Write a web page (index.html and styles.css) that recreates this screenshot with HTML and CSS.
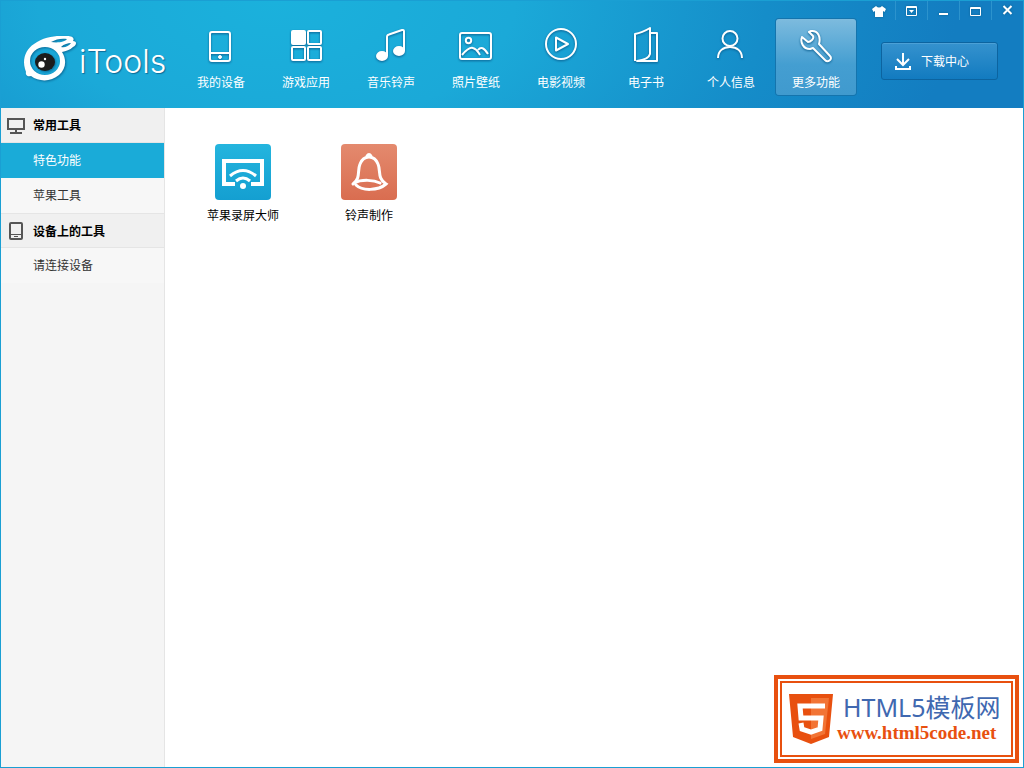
FILE: index.html
```html
<!DOCTYPE html>
<html lang="zh-CN">
<head>
<meta charset="utf-8">
<title>iTools</title>
<link rel="stylesheet" href="styles.css">
</head>
<body>
<div class="app">
  <header class="header">
    <a class="brand" href="#">
      <svg class="brand-mark" viewBox="0 0 54 48" aria-hidden="true">
        <path fill="#fff" fill-rule="evenodd" d="M2 33C-1 23 3 13 11 8C19 2 29 0 37 0H44C49 0 52 2 50 5C54 5 54 9 50 11C47 14 43 15 39 16C44 24 43 33 36 39C28 46 16 46 8 40C5 41 2 39 3 36ZM22 11A15 14 0 1 0 22 39A15 14 0 1 0 22 11ZM28 6C33 3 39 2 44 3C42 6 35 7 28 6ZM38 11C41 8 45 7 48 7C46 10 42 12 38 11Z"/>
        <ellipse cx="22" cy="26" rx="10" ry="9" fill="#1c1c1c"/>
        <circle cx="18.500" cy="28.500" r="3.200" fill="#fff"/>
        <circle cx="22" cy="23" r="1.200" fill="#fff"/>
      </svg>
      <span class="brand-name">iTools</span>
    </a>
    <nav class="nav">
      <button class="nav-item" type="button">
        <svg class="icon" viewBox="0 0 36 40"><rect x="7" y="6" width="20" height="29" rx="2"/><path d="M7 27h20"/><circle cx="17" cy="31" r="1.500" fill="#fff" stroke-width="1"/></svg>
        <span>我的设备</span>
      </button>
      <button class="nav-item" type="button">
        <svg class="icon" viewBox="0 0 36 40"><rect x="4" y="5" width="13" height="13" rx="1" fill="#fff"/><rect x="20" y="5" width="13" height="13" rx="1"/><rect x="4" y="21" width="13" height="13" rx="1"/><rect x="20" y="21" width="13" height="13" rx="1"/></svg>
        <span>游戏应用</span>
      </button>
      <button class="nav-item" type="button">
        <svg class="icon" viewBox="0 0 36 40"><path d="M14 30V11Q14 9 16 8.500L29 4Q31 3.500 31 5.500V25"/><ellipse cx="9" cy="30" rx="5" ry="4" fill="#fff"/><ellipse cx="26" cy="25" rx="5" ry="4" fill="#fff"/></svg>
        <span>音乐铃声</span>
      </button>
      <button class="nav-item" type="button">
        <svg class="icon" viewBox="0 0 36 40"><rect x="2" y="7" width="31" height="26" rx="2"/><circle cx="10.500" cy="14.500" r="2.700"/><path d="M4 29C9 23 12 21 15 22C19 23 20 26 22 29M20 24C23 20 26 22 30 28"/></svg>
        <span>照片壁纸</span>
      </button>
      <button class="nav-item" type="button">
        <svg class="icon" viewBox="0 0 36 40"><circle cx="18" cy="18" r="15"/><path d="M13 11.500V24.500L25 18Z"/></svg>
        <span>电影视频</span>
      </button>
      <button class="nav-item" type="button">
        <svg class="icon" viewBox="0 0 36 40"><path d="M7 35V8C13 7 17 5 22 2V28C21 32 17 34 9 35H29V7H23"/></svg>
        <span>电子书</span>
      </button>
      <button class="nav-item" type="button">
        <svg class="icon" viewBox="0 0 36 40"><circle cx="17" cy="12.500" r="7.500"/><path d="M5 32C5 25 10 21 17 21S29 25 29 32"/></svg>
        <span>个人信息</span>
      </button>
      <button class="nav-item nav-item-active" type="button" aria-current="page">
        <svg class="icon" viewBox="0 0 36 40"><path d="M4 11C2 16 5 23 12 23L15 22L27 34C30 37 35 33 32 30L21 18C23 11 20 4 13 5L11 6L15 10Q16 12 14 14Q12 16 10 16Z"/></svg>
        <span>更多功能</span>
      </button>
    </nav>
    <div class="side">
      <div class="window-controls">
        <button class="win-btn" type="button" aria-label="换肤"><svg viewBox="0 0 16 14"><path fill="#fff" d="M5 1Q8 4 11 1L15 4L13.500 7L12 6V12H4V6L2.500 7L1 4Z"/></svg></button>
        <button class="win-btn" type="button" aria-label="菜单"><svg viewBox="0 0 16 14"><path fill="none" stroke="#fff" d="M2.500 1.500h10v9h-10zM2 2.500h11"/><path fill="#fff" d="M5 5h5L7.500 8z"/></svg></button>
        <button class="win-btn" type="button" aria-label="最小化"><svg viewBox="0 0 16 14"><path fill="#fff" d="M3 8h9v2H3z"/></svg></button>
        <button class="win-btn" type="button" aria-label="最大化"><svg viewBox="0 0 16 14"><path fill="none" stroke="#fff" d="M2.500 2.500h10v8h-10zM2 3.500h11"/></svg></button>
        <button class="win-btn" type="button" aria-label="关闭"><svg viewBox="0 0 16 14"><path fill="none" stroke="#fff" stroke-width="2" d="M3.500 1L11.500 9M11.500 1L3.500 9"/></svg></button>
      </div>
      <button class="download" type="button">
        <svg viewBox="0 0 18 20"><path fill="none" stroke="#fff" stroke-width="2" d="M9 1V13M3 7L9 13L15 7M2 14V17H16V14"/></svg>
        <span>下载中心</span>
      </button>
    </div>
  </header>
  <div class="body">
    <aside class="sidebar">
      <h2 class="group-title">
        <svg viewBox="0 0 20 20"><path d="M2 3h16v10H2zM10 13v4M4 17h12"/></svg>常用工具
      </h2>
      <a class="side-link side-link-active" href="#">特色功能</a>
      <a class="side-link" href="#">苹果工具</a>
      <h2 class="group-title group-title-next">
        <svg viewBox="0 0 20 20"><rect x="4" y="1" width="12" height="16" rx="1"/><path d="M4 12.500h12M8 14.500h4" stroke-width="1"/></svg>设备上的工具
      </h2>
      <a class="side-link" href="#">请连接设备</a>
    </aside>
    <main class="content">
      <div class="tools">
        <a class="tool" href="#">
          <svg class="tool-icon tool-icon-blue" viewBox="0 0 56 56"><path d="M20 40H9V17H47V40H36" stroke-width="4"/><path d="M15 32Q28 21 41 32M21 37Q28 31 35 37"/><circle cx="28" cy="42" r="3" fill="#fff" stroke="none"/></svg>
          <span>苹果录屏大师</span>
        </a>
        <a class="tool" href="#">
          <svg class="tool-icon tool-icon-red" viewBox="0 0 56 56"><path d="M12 40C20 34 16 27 19 20C21 15 24 13 28 13S35 15 37 20C40 27 36 34 45 40C37 47 21 47 15 41M13 39C21 35 33 36 39 39M26 12Q28 9 30 12"/></svg>
          <span>铃声制作</span>
        </a>
      </div>
      <a class="sponsor" href="#">
        <span class="sponsor-inner">
          <svg class="shield" viewBox="0 0 44 50"><path fill="#e8500f" d="M0 0H44L40 43L22 50L4 43Z"/><path fill="#f27435" d="M22 4H40L36 40L22 45Z"/><path fill="none" stroke="#fff" stroke-width="5" d="M36 12H11L12 24H32L31 35L22 38L13 35L12 29"/></svg>
          <span class="sponsor-text">
            <span class="sponsor-name">HTML5模板网</span>
            <span class="sponsor-url">www.html5code.net</span>
          </span>
        </span>
      </a>
    </main>
  </div>
</div>
</body>
</html>
```
FILE: styles.css
```css
* { box-sizing: border-box; }
body {
  margin: 0;
  font: 12px/16px "Liberation Sans", "Noto Sans CJK SC", sans-serif;
  color: #000;
}
a { color: inherit; text-decoration: none; }
button { font: inherit; color: inherit; background: none; border: 0; padding: 0; cursor: pointer; }
.app {
  min-height: 100vh;
  display: flex;
  flex-direction: column;
  border: 1px solid #1a9fd3;
}
.header {
  display: flex;
  align-items: flex-start;
  padding-bottom: 13px;
  color: #fff;
  background: radial-gradient(ellipse 680px 360px at 27% 0, #1bb1dc 0%, #1ba9d8 35%, #158dc9 72%, #137dc1 100%);
}
.brand {
  display: flex;
  align-items: flex-start;
  flex: none;
  width: 180px;
  padding: 35px 0 0 22px;
}
.brand-mark { width: 54px; height: 48px; overflow: visible; filter: drop-shadow(1px 1px 1px #0b6c99); }
.brand-name {
  padding-top: 6px;
  margin-left: 2px;
  font: 300 32px/40px Inter, sans-serif;
  text-shadow: 1px 1px 1px #0b6c99;
}
.nav { display: flex; gap: 5px; padding-top: 18px; }
.nav-item {
  display: flex;
  flex-direction: column;
  align-items: center;
  gap: 9px;
  width: 80px;
  height: 76px;
  padding-top: 7px;
  border-radius: 3px;
}
.nav-item-active {
  background: linear-gradient(#7dbbde, #449ed1 60%, #409ace);
  box-shadow: 0 0 0 1px #1474ad;
}
.icon {
  width: 36px;
  height: 40px;
  overflow: visible;
  fill: none;
  stroke: #fff;
  stroke-width: 2;
  stroke-linejoin: round;
  filter: drop-shadow(0 1px 1px #0b5f90);
}
.side { margin-left: auto; display: flex; flex-direction: column; gap: 22px; }
.window-controls { display: flex; }
.win-btn { width: 32px; height: 19px; }
.win-btn + .win-btn { border-left: 1px solid #2c93cd; }
.win-btn svg { display: block; width: 16px; height: 14px; margin: 2px auto 0; filter: drop-shadow(0 0 1px #0b5f90); }
.download {
  display: flex;
  align-items: center;
  gap: 9px;
  width: 117px;
  height: 38px;
  margin-left: 18px;
  padding: 1px 0 0 12px;
  border: 1px solid #0c64a0;
  border-radius: 3px;
  background: linear-gradient(#3592ce, #127bc0);
  box-shadow: inset 0 1px #4ba0d6;
}
.download svg { width: 18px; height: 20px; }
.body { flex: 1; display: flex; }
.sidebar { flex: none; width: 164px; background: #f5f5f5; border-right: 1px solid #e5e5e5; }
.group-title {
  display: flex;
  align-items: center;
  gap: 7px;
  height: 35px;
  margin: 0;
  padding: 2px 0 0 5px;
  font-size: 12px;
  line-height: 16px;
  background: #f0f0f0;
  border-bottom: 1px solid #e5e5e5;
}
.group-title-next { border-top: 1px solid #e5e5e5; }
.group-title svg { width: 20px; height: 20px; fill: none; stroke: #555; stroke-width: 2; }
.side-link {
  display: block;
  padding: 2px 0 0 32px;
  line-height: 33px;
  color: #333;
  background: #f7f7f7;
}
.side-link-active { color: #fff; background: #1aabd8; }
.content { flex: 1; display: flex; flex-direction: column; background: #fff; }
.tools { display: flex; flex-wrap: wrap; gap: 26px; padding: 36px 28px; }
.tool { display: flex; flex-direction: column; align-items: center; gap: 8px; width: 100px; }
.tool-icon {
  width: 56px;
  height: 56px;
  border-radius: 4px;
  fill: none;
  stroke: #fff;
  stroke-width: 3;
  stroke-linecap: round;
}
.tool-icon-blue { background: linear-gradient(#24b5de, #149fd1); stroke-linecap: butt; }
.tool-icon-red { background: linear-gradient(#e48a6e, #d96d50); }
.sponsor {
  align-self: flex-end;
  margin: auto 4px 4px 0;
  padding: 2px;
  width: 245px;
  border: 4px solid #e8500f;
}
.sponsor-inner {
  display: flex;
  align-items: center;
  gap: 4px;
  height: 76px;
  padding-left: 7px;
  border: 2px solid #e8500f;
}
.shield { flex: none; width: 44px; height: 50px; }
.sponsor-text { display: flex; flex-direction: column; }
.sponsor-name { padding-left: 6px; font: 25px/28px "Noto Sans", "Noto Sans CJK SC", sans-serif; color: #4068b0; white-space: nowrap; }
.sponsor-url { font: bold 19px/24px "Liberation Serif", serif; color: #e8500f; }
```
